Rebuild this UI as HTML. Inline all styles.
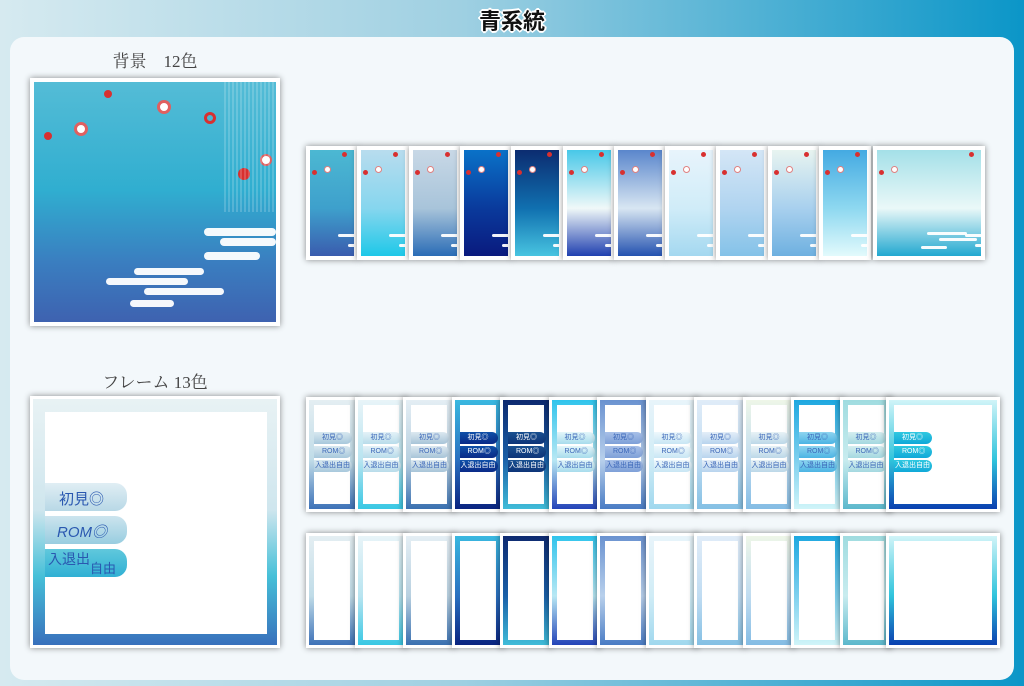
<!DOCTYPE html>
<html><head><meta charset="utf-8">
<style>
*{margin:0;padding:0;box-sizing:border-box}
body{width:1024px;height:686px;overflow:hidden;position:relative;font-family:"Liberation Serif","Noto Serif CJK SC",serif;background:linear-gradient(90deg,#d6eaf0 0%,#9fd0e2 45%,#0b96c8 100%)}
.title{position:absolute;left:0;width:1024px;top:4px;text-align:center;font:bold 22px "Liberation Sans","Noto Sans CJK JP",sans-serif;color:#111;text-shadow:-2px 0 #fff,2px 0 #fff,0 -2px #fff,0 2px #fff,-1px -1px #fff,1px 1px #fff,-1px 1px #fff,1px -1px #fff}
.panel{position:absolute;left:10px;top:37px;width:1004px;height:643px;background:#f3f8fb;border-radius:14px}
.lbl{position:absolute;font-size:17px;color:#444;text-align:center;width:250px}
.card{position:absolute;background:#fff;padding:4px;box-shadow:0 0 6px rgba(0,0,0,.45)}
.card>div{width:100%;height:100%;position:relative;overflow:hidden}
.cl{position:absolute;background:#fff;height:3px;border-radius:2px;opacity:.95}
.fi{position:absolute;background:#fff}
.tab{position:absolute;border-radius:0 12px 12px 0;color:#2a58b0;font-family:"Liberation Sans","Noto Sans CJK JP",sans-serif;white-space:nowrap;overflow:hidden}
.st{border-radius:0 6px 6px 0}
.dot{position:absolute;border-radius:50%}
</style></head><body>
<div class="title">青系統</div>
<div class="panel"></div>
<div class="lbl" style="left:30px;top:47px">背景　12色</div>
<div class="lbl" style="left:30px;top:368px">フレーム 13色</div>

<div class="card" style="left:30px;top:78px;width:250px;height:248px;padding:4px">
<div style="background:linear-gradient(180deg,#54bcd6 0%,#30aed0 45%,#3a7ec0 75%,#3e62b0 100%)">
 <div class="dot" style="left:70px;top:8px;width:8px;height:8px;background:#d83030"></div>
 <div class="dot" style="left:40px;top:40px;width:14px;height:14px;background:#fff;border:3px solid #e06060"></div>
 <div class="dot" style="left:10px;top:50px;width:8px;height:8px;background:#d83030"></div>
 <div class="dot" style="left:123px;top:18px;width:14px;height:14px;background:#fff;border:3px solid #e06060"></div>
 <div class="dot" style="left:170px;top:30px;width:12px;height:12px;border:3px solid #d83030"></div>
 <div class="dot" style="left:204px;top:86px;width:12px;height:12px;background:#d83030"></div>
 <div class="dot" style="left:226px;top:72px;width:12px;height:12px;background:#fff;border:2px solid #e06060"></div>
 <div style="position:absolute;left:190px;top:0;width:52px;height:130px;background:repeating-linear-gradient(90deg,rgba(255,255,255,.25) 0 2px,transparent 2px 4px);opacity:.7"></div>
 <div class="cl" style="left:170px;top:146px;width:72px;height:8px;border-radius:4px"></div>
 <div class="cl" style="left:186px;top:156px;width:56px;height:8px;border-radius:4px"></div>
 <div class="cl" style="left:170px;top:170px;width:56px;height:8px;border-radius:4px"></div>
 <div class="cl" style="left:100px;top:186px;width:70px;height:7px;border-radius:4px"></div>
 <div class="cl" style="left:72px;top:196px;width:82px;height:7px;border-radius:4px"></div>
 <div class="cl" style="left:110px;top:206px;width:80px;height:7px;border-radius:4px"></div>
 <div class="cl" style="left:96px;top:218px;width:44px;height:7px;border-radius:4px"></div>
</div></div>

<div class="card" style="left:30px;top:396px;width:250px;height:252px;padding:3px">
<div style="background:linear-gradient(180deg,#e8f2f4 0%,#cfe6ee 45%,#46c0d8 72%,#3870bc 100%)">
 <div class="fi" style="left:12px;top:13px;width:222px;height:222px"></div>
 <div class="tab" style="left:12px;top:84px;width:82px;height:28px;background:linear-gradient(#e0eef4,#b8d8e6);font-size:15px;padding:5px 0 0 14px">初見◎</div>
 <div class="tab" style="left:12px;top:117px;width:82px;height:28px;background:linear-gradient(#cce4ee,#98cde0);font-size:15px;padding:5px 0 0 12px;font-style:italic">ROM◎</div>
 <div class="tab" style="left:12px;top:150px;width:82px;height:28px;background:linear-gradient(#60c8dc,#30b0d4);font-size:14px;padding:0 0 0 3px">入退出<span style="font-size:13px;position:relative;top:9px">自由</span></div>
</div></div>

<div id="bgs"></div><div id="frs"></div>
<script>
var bg=[
['#4cb8d2','#3ea0cc','#3a5cae'],['#b8dcee','#86d6ee','#1ec8e8'],['#c8d8e6','#a8c4da','#2a6cb6'],
['#0a72c8','#0a3a9c','#0a1a7e'],['#0c2c70','#1070b0','#48c4e0'],['#48c8e8','#f0f8f8','#2040b0'],
['#5a86cc','#d8e6f2','#2452b0'],['#e8f4fc','#d0ecf8','#a4d8f0'],['#d4e6f6','#b0d4f0','#84c2e8'],
['#e8f4f0','#a8d0ee','#6eb0e0'],['#44aae2','#8ed8f0','#e2fafc'],['#a4e0e8','#eaf8f8','#22a8d0']];
var h='';
for(var i=0;i<12;i++){var x=i<11?306+i*51.3:873,w=i<11?52:112;var c=bg[i];
h+='<div class="card" style="left:'+x+'px;top:146px;width:'+w+'px;height:114px;padding:4px"><div style="background:linear-gradient(180deg,'+c[0]+','+c[1]+' 55%,'+c[2]+')">'+
'<div class="dot" style="left:'+(w-20)+'px;top:2px;width:5px;height:5px;background:#d83030"></div>'+
'<div class="dot" style="left:2px;top:20px;width:5px;height:5px;background:#d83030"></div>'+
'<div class="dot" style="left:14px;top:16px;width:7px;height:7px;background:#fff;border:1px solid #e08080"></div>'+
'<div class="cl" style="left:'+(w-24)+'px;top:84px;width:20px"></div><div class="cl" style="left:'+(w-14)+'px;top:94px;width:10px"></div>'+
(i==11?'<div class="cl" style="left:50px;top:82px;width:40px"></div><div class="cl" style="left:62px;top:88px;width:38px"></div><div class="cl" style="left:44px;top:96px;width:26px"></div>':'')+
'</div></div>';}
document.getElementById('bgs').innerHTML=h;
var fr=[['#e4eef2','#c0dce8','#3e72b8'],['#e8f4f8','#b8e4f0','#38c8e4'],['#e4eef4','#b8d0e0','#3a70b0'],
['#3ab8e0','#2a70c0','#0a2480'],['#0e2a70','#1a60a8','#40bcd8'],['#30c4ec','#b8e8f4','#2444b8'],
['#6a92d0','#b8d0ec','#4a7cc4'],['#e8f4fa','#d0ecf6','#a0d8ee'],['#e0ecf8','#c0dcf2','#84c0e4'],
['#eef6e8','#c0dcf0','#84bce4'],['#1ea8e0','#7ed0ee','#d0f4f8'],['#a0dce0','#c8ecef','#5cb8cc'],['#d0f4f8','#30c4dc','#0a40b0']];
var tb=[['#d8e8f0','#a8c8dc'],['#e4f2f8','#b8dcea'],['#dce8f0','#a8c4d8'],['#1050a8','#0a2a88'],['#1a5090','#0e3478'],['#e4f6fa','#a8dcec'],['#a8c0e8','#7ea0d8'],['#eef8fc','#c8e6f4'],['#e4eef8','#b8d4ee'],['#e8f2f6','#bcd8e8'],['#8ed4f0','#4cb4e4'],['#d4eef0','#a4d8e0'],['#30c8e0','#10a8d8']];
h='';
for(var r=0;r<2;r++)for(var i=0;i<13;i++){var x=i<12?306+i*48.5:886,w=i<12?52:114,y=r?533:397;var c=fr[i],t=tb[i],dk=(i==3||i==4||i==12);var tc=dk?'#fff':'#3a66b8';
h+='<div class="card" style="left:'+x+'px;top:'+y+'px;width:'+w+'px;height:115px;padding:3px"><div style="background:linear-gradient(180deg,'+c[0]+','+c[1]+' 55%,'+c[2]+')">'+
'<div class="fi" style="left:5px;top:5px;width:'+(w-16)+'px;height:99px"></div>';
if(!r){for(var k=0;k<3;k++)h+='<div class="tab st" style="left:5px;top:'+(32+k*14)+'px;width:38px;height:12px;background:linear-gradient('+t[0]+','+t[1]+');font-size:7px;line-height:12px;padding-left:'+(k==2?1:8)+'px;color:'+tc+'">'+['初見◎','ROM◎','入退出自由'][k]+'</div>';}
h+='</div></div>';}
document.getElementById('frs').innerHTML=h;
</script>
</body></html>
